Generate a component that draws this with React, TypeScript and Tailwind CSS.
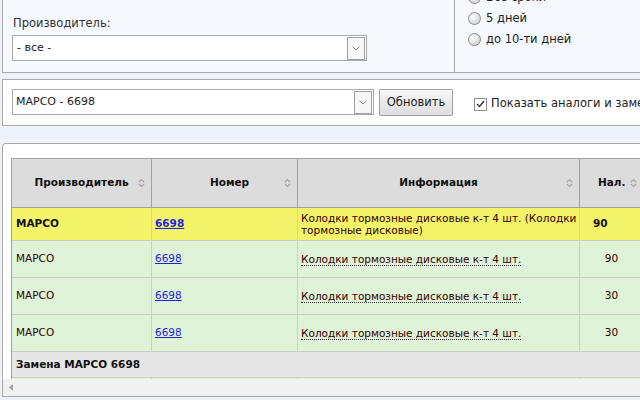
import React from 'react';

const SortIcon = () => (
  <svg
    width="7"
    height="10"
    viewBox="0 0 7 10"
    className="absolute right-[6px] top-1/2 -translate-y-1/2"
  >
    <path d="M0.8 4.2 L3.5 1.5 L6.2 4.2" fill="none" stroke="#a3a3a3" strokeWidth="1.1" />
    <path d="M0.8 5.8 L3.5 8.5 L6.2 5.8" fill="none" stroke="#a3a3a3" strokeWidth="1.1" />
  </svg>
);

const Chevron = () => (
  <svg width="8" height="5" viewBox="0 0 8 5">
    <path d="M0.5 0.8 L4 4 L7.5 0.8" fill="none" stroke="#8a8a8a" strokeWidth="1" />
  </svg>
);

interface SelectProps {
  value: string;
  className: string;
}

const FakeSelect: React.FC<SelectProps> = ({ value, className }) => (
  <div className={`flex shrink-0 items-center h-[26px] border border-[#a9a9a9] bg-white ${className}`}>
    <span className="text-[11px] text-[#222]">{value}</span>
    <span className="ml-auto mr-[1px] flex h-[23px] w-[18px] items-center justify-center border border-[#a0a0a0] bg-[#f7f7f7]">
      <Chevron />
    </span>
  </div>
);

const Radio = ({ label }: { label: string }) => (
  <div className="flex h-[21px] items-center gap-[5px]">
    <span className="h-[13px] w-[13px] rounded-full border border-[#8c8c8c] bg-[radial-gradient(circle_at_35%_35%,#ffffff,#dadada_65%,#bcbcbc)]" />
    <span className="text-[11.5px] text-[#222]">{label}</span>
  </div>
);

const headCell =
  'relative flex h-[49px] items-center justify-center border-r border-b border-[#a0a0a0] bg-[#dcdcdc] font-bold text-[#111]';
const bodyCell = 'flex items-center border-r border-b border-[#cdcdcd]';

const GreenRow = ({ qty }: { qty: string }) => (
  <>
    <div className={`${bodyCell} h-[37px] bg-[#dff3d8] pl-[4px]`}>МАРСО</div>
    <div className={`${bodyCell} h-[37px] bg-[#dff3d8] pl-[3px]`}>
      <a className="text-[#1f1fe6] underline">6698</a>
    </div>
    <div className={`${bodyCell} h-[37px] bg-[#dff3d8] pl-[3px]`}>
      <span className="border-b border-dotted border-[#333] leading-[12px]">
        Колодки тормозные дисковые к-т 4 шт.
      </span>
    </div>
    <div className={`${bodyCell} h-[37px] bg-[#dff3d8] justify-center`}>{qty}</div>
  </>
);

export default function App() {
  return (
    <div className="h-[400px] w-[640px] overflow-hidden bg-[#eef3fa] font-['DejaVu_Sans',sans-serif] text-[11px] text-[#330000]">
      {/* Filters */}
      <div className="ml-[2px] flex h-[73px] border-b border-l border-[#a9a9a9] bg-[#f5f8fd]">
        <div className="w-[451px] shrink-0 pl-[9px] pt-[15px]">
          <div className="pl-[1px] text-[11.5px] leading-[16px] text-[#333]">Производитель:</div>
          <FakeSelect value="- все -" className="mt-[4px] w-[355px] pl-[4px]" />
        </div>
        <div className="flex-1 border-l border-[#a9a9a9] pl-[13px]">
          <div className="-mt-[13px]">
            <Radio label="Все сроки" />
            <Radio label="5 дней" />
            <Radio label="до 10-ти дней" />
          </div>
        </div>
      </div>

      {/* Search */}
      <div className="ml-[2px] mt-[6px] flex h-[47px] items-start border-y border-l border-[#a9a9a9] bg-white pl-[9px] pt-[9px]">
        <FakeSelect value="МАРСО - 6698" className="w-[362px] pl-[3px]" />
        <button className="ml-[5px] h-[27px] w-[74px] shrink-0 rounded-[2px] border border-[#a0a0a0] bg-gradient-to-b from-[#f7f7f7] to-[#dedede] text-[11.5px] text-[#1a1a1a]">
          Обновить
        </button>
        <label className="ml-[21px] flex h-[27px] items-center gap-[4px] pt-[3px] text-[11.5px] text-[#222] whitespace-nowrap">
          <span className="flex h-[13px] w-[13px] shrink-0 items-center justify-center border border-[#8f8f8f] bg-white">
            <svg width="9" height="8" viewBox="0 0 9 8">
              <path d="M1 4 L3.5 6.5 L8 1" fill="none" stroke="#333" strokeWidth="1.4" />
            </svg>
          </span>
          Показать аналоги и замены
        </label>
      </div>

      {/* Results */}
      <div className="ml-[2px] mt-[17px] rounded-tl-[4px] border-y border-l border-[#a9a9a9] bg-white">
        <div className="h-[235px] overflow-hidden pl-[8px] pt-[14px] text-[10.5px]">
          <div className="grid w-max grid-cols-[140px_146px_282px_64px] border-l border-t border-[#a0a0a0]">
            <div className={headCell}>
              Производитель
              <SortIcon />
            </div>
            <div className={`${headCell} pl-[10px]`}>
              Номер
              <SortIcon />
            </div>
            <div className={headCell}>
              Информация
              <SortIcon />
            </div>
            <div className={`${headCell} !justify-start pl-[18px]`}>
              Нал.
              <SortIcon />
            </div>

            <div className={`${bodyCell} h-[33px] bg-[#f4f46b] pl-[4px] font-bold text-[#111]`}>МАРСО</div>
            <div className={`${bodyCell} h-[33px] bg-[#f4f46b] pl-[3px]`}>
              <a className="font-bold text-[#1f1fe6] underline">6698</a>
            </div>
            <div className={`${bodyCell} h-[33px] bg-[#f4f46b] pl-[3px] leading-[12px] whitespace-nowrap`}>
              <span>
                Колодки тормозные дисковые к-т 4 шт. (Колодки
                <br />
                тормозные дисковые)
              </span>
            </div>
            <div className={`${bodyCell} h-[33px] bg-[#f4f46b] pl-[13px] font-bold text-[#111]`}>90</div>

            <GreenRow qty="90" />
            <GreenRow qty="30" />
            <GreenRow qty="30" />

            <div className="col-span-4 flex h-[26px] items-center border-r border-b border-[#cdcdcd] bg-[#e6e6e6] pl-[4px] font-bold text-[#111]">
              Замена МАРСО 6698
            </div>

            <div className="h-[10px] border-r border-[#cdcdcd] bg-[#dff3d8]" />
            <div className="h-[10px] border-r border-[#cdcdcd] bg-[#dff3d8]" />
            <div className="h-[10px] border-r border-[#cdcdcd] bg-[#dff3d8]" />
            <div className="h-[10px] border-r border-[#cdcdcd] bg-[#dff3d8]" />
          </div>
        </div>
        <div className="flex h-[17px] items-center bg-[#f1f1f1] pl-[6px]">
          <svg width="4" height="7" viewBox="0 0 4 7">
            <path d="M4 0 L0 3.5 L4 7 Z" fill="#a3a3a3" />
          </svg>
        </div>
      </div>
    </div>
  );
}
